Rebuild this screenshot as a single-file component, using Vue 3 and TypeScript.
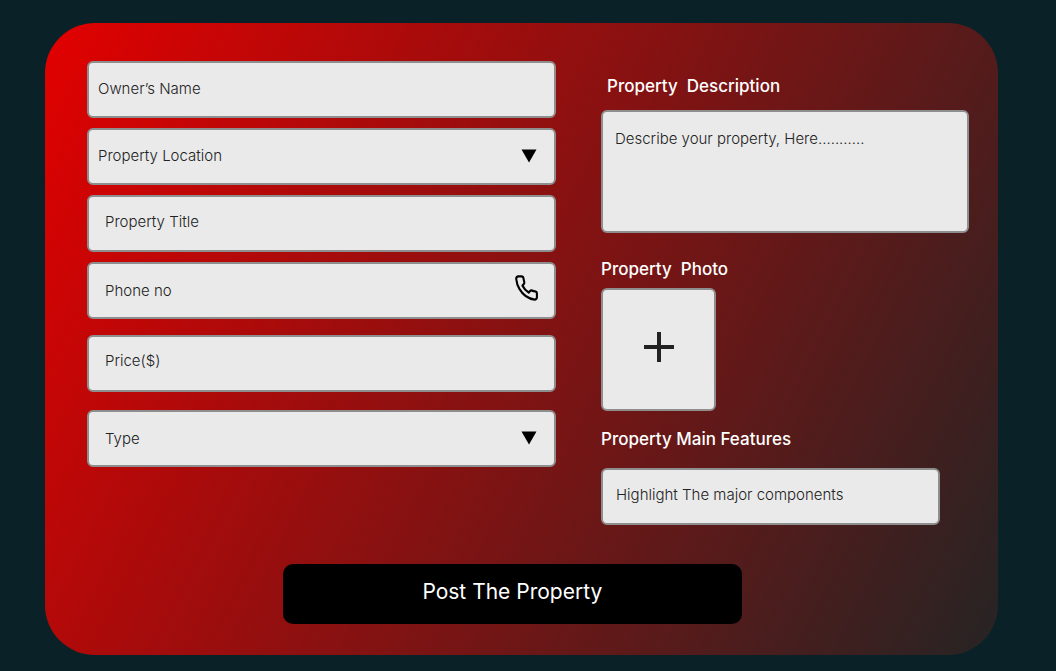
<script setup lang="ts">
import { reactive } from 'vue'

const form = reactive({
  owner: '',
  location: '',
  title: '',
  phone: '',
  price: '',
  type: '',
  description: '',
  features: '',
})

const locations: string[] = ['City Centre', 'Suburbs', 'Countryside']
const types: string[] = ['House', 'Apartment', 'Land']
</script>

<template>
  <main class="page">
    <form class="panel" @submit.prevent>
      <div class="columns">
        <div class="fields">
          <input v-model="form.owner" class="control near" type="text" placeholder="Owner’s Name" aria-label="Owner’s Name" />
          <div class="picker">
            <select v-model="form.location" class="control near" aria-label="Property Location">
              <option value="" disabled>Property Location</option>
              <option v-for="place in locations" :key="place">{{ place }}</option>
            </select>
            <svg class="arrow" viewBox="0 0 16 14" aria-hidden="true"><path d="M0.5 0.5H15.5L8 13.5Z" /></svg>
          </div>
          <input v-model="form.title" class="control title" type="text" placeholder="Property Title" aria-label="Property Title" />
          <div class="picker">
            <input v-model="form.phone" class="control" type="tel" placeholder="Phone no" aria-label="Phone no" />
            <svg class="phone" viewBox="0 0 24 24" preserveAspectRatio="none" aria-hidden="true">
              <path d="M22 16.92v3a2 2 0 0 1-2.18 2 19.79 19.79 0 0 1-8.63-3.07 19.5 19.5 0 0 1-6-6 19.79 19.79 0 0 1-3.07-8.67A2 2 0 0 1 4.11 2h3a2 2 0 0 1 2 1.72 12.84 12.84 0 0 0 .7 2.81 2 2 0 0 1-.45 2.11L8.09 9.91a16 16 0 0 0 6 6l1.27-1.27a2 2 0 0 1 2.11-.45 12.84 12.84 0 0 0 2.81.7A2 2 0 0 1 22 16.92z" />
            </svg>
          </div>
          <input v-model="form.price" class="control price" type="text" inputmode="decimal" placeholder="Price($)" aria-label="Price($)" />
          <div class="picker type">
            <select v-model="form.type" class="control" aria-label="Type">
              <option value="" disabled>Type</option>
              <option v-for="kind in types" :key="kind">{{ kind }}</option>
            </select>
            <svg class="arrow" viewBox="0 0 16 14" aria-hidden="true"><path d="M0.5 0.5H15.5L8 13.5Z" /></svg>
          </div>
        </div>

        <div class="details">
          <label class="heading inset" for="description">Property&nbsp; Description</label>
          <textarea id="description" v-model="form.description" class="control description" placeholder="Describe your property, Here..........."></textarea>
          <span id="photo-label" class="heading photo-heading">Property&nbsp; Photo</span>
          <button class="control photo" type="button" aria-labelledby="photo-label">
            <svg class="plus" viewBox="0 0 30 30" aria-hidden="true"><path d="M15 0V30M0 15H30" /></svg>
          </button>
          <label class="heading features-heading" for="features">Property Main Features</label>
          <input id="features" v-model="form.features" class="control features" type="text" placeholder="Highlight The major components" />
        </div>
      </div>
      <button class="submit" type="submit">Post The Property</button>
    </form>
  </main>
</template>

<style>
body {
  margin: 0;
  background: #0a2227;
}
</style>

<style scoped>
.page,
.page * {
  box-sizing: border-box;
}

.page {
  padding: 23px 58px 16px 45px;
  font-family: Inter, "Liberation Sans", sans-serif;
}

.panel {
  padding: 38px 29px 31px 42px;
  border-radius: 50px;
  background: linear-gradient(117deg, #e20000, #262424);
}

.columns {
  display: grid;
  grid-template-columns: 469fr 368fr;
  column-gap: 45px;
}

.fields,
.details {
  display: flex;
  flex-direction: column;
}

.fields {
  gap: 10px;
}

.control {
  display: block;
  width: 100%;
  height: 57px;
  margin: 0;
  padding: 0 16px;
  border: 2px solid #8e8e8e;
  border-radius: 6px;
  background: #eaeaea;
  color: #222;
  font: 300 15px/20px Inter, "Liberation Sans", sans-serif;
  appearance: none;
}

.control::placeholder {
  color: #222;
  opacity: 1;
}

.near {
  padding-bottom: 2px;
  padding-left: 9px;
}

.title {
  padding-bottom: 4px;
}

.price {
  margin-top: 6px;
  padding-bottom: 6px;
}

.picker {
  position: relative;
}

.type {
  margin-top: 8px;
}

.arrow {
  position: absolute;
  top: 21px;
  right: 19px;
  width: 16px;
  height: 14px;
  pointer-events: none;
}

.phone {
  position: absolute;
  top: 12px;
  right: 17px;
  width: 25px;
  height: 28px;
  fill: none;
  stroke: #000;
  stroke-width: 2;
  stroke-linejoin: round;
  pointer-events: none;
}

.details {
  align-items: flex-start;
  padding-top: 15px;
}

.heading {
  color: #fff;
  font-size: 17px;
  font-weight: 500;
  line-height: 20px;
}

.inset {
  padding-left: 6px;
}

.description {
  height: 123px;
  margin-top: 14px;
  padding: 17px 12px;
  resize: none;
}

.photo-heading {
  margin-top: 26px;
}

.photo {
  display: grid;
  place-items: center;
  width: 115px;
  height: 123px;
  margin-top: 9px;
  padding-bottom: 5px;
}

.plus {
  width: 30px;
  height: 30px;
  stroke: #222;
  stroke-width: 4;
}

.features-heading {
  margin-top: 18px;
}

.features {
  width: 92%;
  margin-top: 19px;
  padding: 0 13px 5px;
}

.submit {
  display: block;
  width: 52%;
  height: 60px;
  margin: 39px 0 0 196px;
  padding: 0 0 4px;
  border: 0;
  border-radius: 10px;
  background: #000;
  color: #fff;
  font: 400 21px/24px Inter, "Liberation Sans", sans-serif;
}
</style>
